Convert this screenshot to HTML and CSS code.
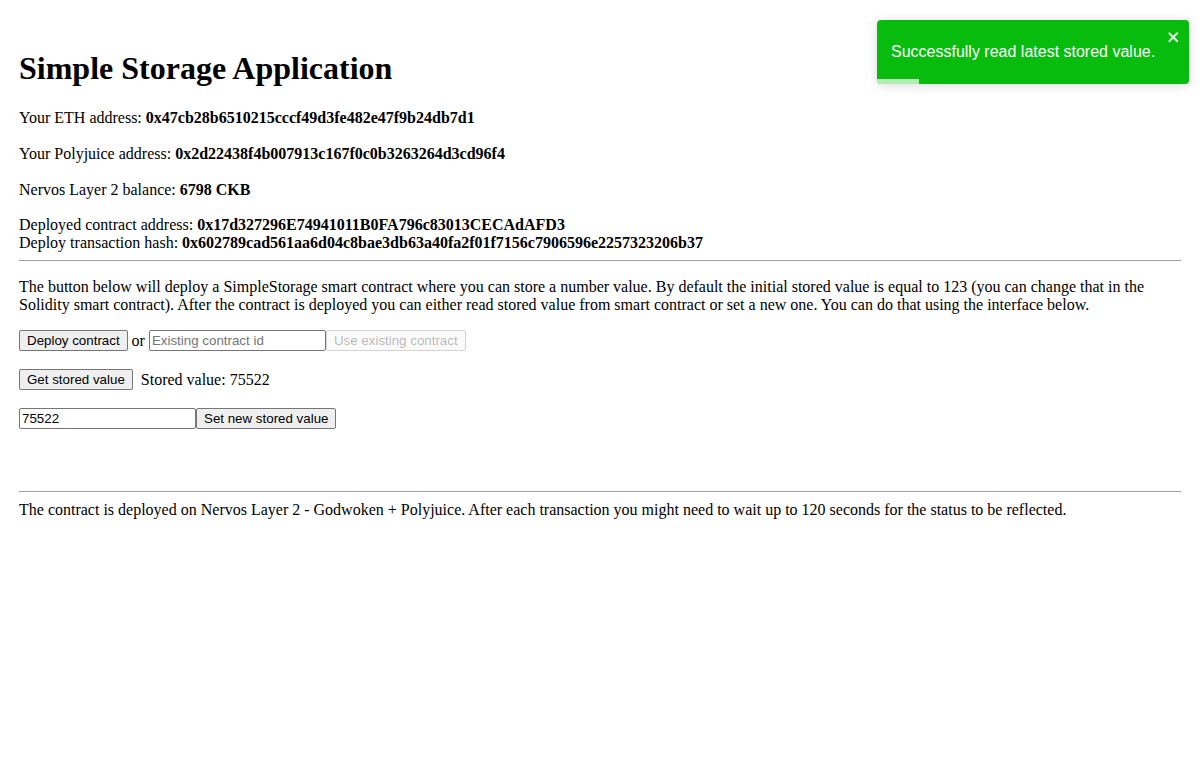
FILE: index.html
```html
<!DOCTYPE html>
<html>
<head>
<meta charset="utf-8">
<link rel="stylesheet" href="styles.css">
</head>
<body>
<div class="app">
  <h1 class="title">Simple Storage Application</h1>
  <div class="info">
    Your ETH address: <b>0x47cb28b6510215cccf49d3fe482e47f9b24db7d1</b>
    <br><br>
    Your Polyjuice address: <b>0x2d22438f4b007913c167f0c0b3263264d3cd96f4</b>
    <br><br>
    Nervos Layer 2 balance: <b>6798 CKB</b>
    <br><br>
    Deployed contract address: <b>0x17d327296E74941011B0FA796c83013CECAdAFD3</b><br>
    Deploy transaction hash: <b>0x602789cad561aa6d04c8bae3db63a40fa2f01f7156c7906596e2257323206b37</b>
  </div>
  <hr class="rule">
  <p class="desc">The button below will deploy a SimpleStorage smart contract where you can store a number value. By default the initial stored value is equal to 123 (you can change that in the Solidity smart contract). After the contract is deployed you can either read stored value from smart contract or set a new one. You can do that using the interface below.</p>
  <div class="row">
    <button class="btn">Deploy contract</button>
    <span class="or">or</span>
    <input class="field field-id" placeholder="Existing contract id">
    <button class="btn" disabled>Use existing contract</button>
  </div>
  <div class="row">
    <button class="btn">Get stored value</button>
    <span class="stored">Stored value: 75522</span>
  </div>
  <div class="row">
    <input class="field field-val" value="75522">
    <button class="btn">Set new stored value</button>
  </div>
  <div class="spacer"></div>
  <hr class="rule">
  <div class="footer">The contract is deployed on Nervos Layer 2 - Godwoken + Polyjuice. After each transaction you might need to wait up to 120 seconds for the status to be reflected.</div>
</div>

<div class="toast">
  <div class="toast-body">Successfully read latest stored value.</div>
  <button class="toast-close" aria-label="close">
    <svg width="14" height="16" viewBox="0 0 14 16"><path fill="#fff" d="M7.71 8.23l3.75 3.75-1.48 1.48-3.75-3.75-3.75 3.75L1 11.980l3.75-3.75L1 4.48 2.48 3l3.75 3.75L9.98 3l1.48 1.48-3.75 3.75z"/></svg>
  </button>
  <div class="toast-progress"></div>
</div>
</body>
</html>
```
FILE: styles.css
```css
html, body {
  margin: 0;
  padding: 0;
  background: #fff;
}
body {
  font-family: "Liberation Serif", "Times New Roman", serif;
  font-size: 16px;
  color: #000;
}
.app {
  padding: 29px 21px 0 19px;
}
.title {
  font-size: 32px;
  font-weight: bold;
  margin: 21px 0 22px 0;
  line-height: 37px;
}
.info {
  line-height: 17.9px;
}
.rule {
  border: 0;
  border-top: 1px solid #a0a0a0;
  height: 0;
  margin: 8px 0;
}
.desc {
  margin: 17px 0 16px 0;
  line-height: 18px;
}
.row {
  margin: 0 0 18px 0;
  display: flex;
  align-items: center;
  height: 21px;
}
.or {
  margin: 0 4px;
}
.stored {
  margin-left: 8px;
}
.btn {
  font-family: Arial, "Liberation Sans", sans-serif;
  font-size: 13.33px;
  background: #efefef;
  border: 1px solid #767676;
  border-radius: 2px;
  padding: 1px 7px;
  height: 21px;
  color: #000;
  margin: 0;
}
.btn:disabled {
  color: rgba(16,16,16,0.3);
  background: rgba(239,239,239,0.3);
  border-color: rgba(118,118,118,0.3);
}
.field {
  font-family: Arial, "Liberation Sans", sans-serif;
  font-size: 13.33px;
  border: 1px solid #767676;
  border-radius: 2px;
  padding: 1px 2px;
  height: 21px;
  box-sizing: border-box;
  margin: 0;
}
.field::placeholder { color: #757575; }
.field-id { width: 177px; }
.field-val { width: 177px; }
.spacer { height: 36px; }
.footer {
  line-height: 18px;
  margin-top: 9px;
}
.toast {
  position: absolute;
  top: 20px;
  right: 13px;
  width: 312px;
  min-height: 64px;
  box-sizing: border-box;
  background: #07bc0c;
  border-radius: 4px;
  box-shadow: 0 1px 10px 0 rgba(0,0,0,.1), 0 2px 15px 0 rgba(0,0,0,.05);
  padding: 8px;
  display: flex;
  overflow: hidden;
}
.toast-body {
  flex: 1;
  margin: auto 0;
  padding: 6px;
  color: #fff;
  font-family: Arial, "Liberation Sans", sans-serif;
  font-size: 16px;
}
.toast-close {
  background: transparent;
  border: 0;
  padding: 0;
  align-self: flex-start;
  opacity: .85;
  margin-top: 1px;
  line-height: 0;
  cursor: pointer;
}
.toast-progress {
  position: absolute;
  left: 0;
  bottom: 0;
  width: 42px;
  height: 5px;
  background: rgba(255,255,255,.7);
}
```
